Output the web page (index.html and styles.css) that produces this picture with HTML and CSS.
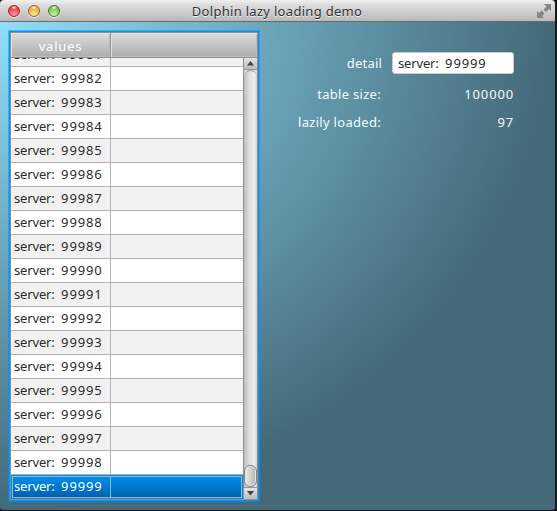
FILE: index.html
```html
<!DOCTYPE html>
<html lang="en">
<head>
<meta charset="utf-8">
<title>Dolphin lazy loading demo</title>
<link rel="stylesheet" href="styles.css">
</head>
<body>
<div class="window">
  <header class="titlebar">
    <div class="lights"><i class="light red"></i><i class="light amber"></i><i class="light green"></i></div>
    <h1>Dolphin lazy loading demo</h1>
    <svg class="expand" width="14" height="14" viewBox="0 0 14 14"><path d="M7 0h7v7l-2-2-3 3-2.500-2.500 3-3zM0 7l2 2 2.500-2.500 3 3L5 12l2 2H0z"/></svg>
  </header>
  <main class="content">
    <section class="table">
      <div class="head"><div class="th first">values</div><div class="th"></div></div>
      <div class="body">
        <div class="rows">
          <div class="row odd"><span class="cell">server: <b>99981</b></span></div>
          <div class="row"><span class="cell">server: <b>99982</b></span></div>
          <div class="row odd"><span class="cell">server: <b>99983</b></span></div>
          <div class="row"><span class="cell">server: <b>99984</b></span></div>
          <div class="row odd"><span class="cell">server: <b>99985</b></span></div>
          <div class="row"><span class="cell">server: <b>99986</b></span></div>
          <div class="row odd"><span class="cell">server: <b>99987</b></span></div>
          <div class="row"><span class="cell">server: <b>99988</b></span></div>
          <div class="row odd"><span class="cell">server: <b>99989</b></span></div>
          <div class="row"><span class="cell">server: <b>99990</b></span></div>
          <div class="row odd"><span class="cell">server: <b>99991</b></span></div>
          <div class="row"><span class="cell">server: <b>99992</b></span></div>
          <div class="row odd"><span class="cell">server: <b>99993</b></span></div>
          <div class="row"><span class="cell">server: <b>99994</b></span></div>
          <div class="row odd"><span class="cell">server: <b>99995</b></span></div>
          <div class="row"><span class="cell">server: <b>99996</b></span></div>
          <div class="row odd"><span class="cell">server: <b>99997</b></span></div>
          <div class="row"><span class="cell">server: <b>99998</b></span></div>
          <div class="row selected"><span class="cell">server: <b>99999</b></span></div>
        </div>
        <div class="scrollbar">
          <div class="arrow"><svg width="7" height="5"><path d="M3.500 0L7 4.500H0z"/></svg></div>
          <div class="track"><div class="thumb"></div></div>
          <div class="arrow"><svg width="7" height="5"><path d="M0 0h7L3.500 4.500z"/></svg></div>
        </div>
      </div>
    </section>
    <section class="form">
      <span class="label detail">detail</span><div class="field">server: <b>99999</b></div>
      <span class="label size">table size:</span><span class="value"><b>100000</b></span>
      <span class="label loaded">lazily loaded:</span><span class="value"><b>97</b></span>
    </section>
  </main>
</div>
</body>
</html>
```
FILE: styles.css
```css
* { box-sizing: border-box; }
body {
  margin: 0;
  height: 511px;
  overflow: hidden;
  background: #16191b;
  font: 13px/17px "Noto Sans", "Open Sans", sans-serif;
  letter-spacing: .3px;
  color: #2b2b2b;
}
b { font-weight: 400; letter-spacing: .85px; }
.window {
  width: 555px;
  height: 510px;
  display: flex;
  flex-direction: column;
  border-radius: 4px 4px 3px 3px;
  overflow: hidden;
}
.titlebar {
  flex: none;
  height: 22px;
  display: grid;
  grid-template-columns: 60px 1fr 60px;
  align-items: center;
  padding: 0 4px 0 8px;
  background: linear-gradient(#f0f0f0, #dcdcdc 25%, #b9b9b9);
  border-bottom: 1px solid #696969;
}
.titlebar h1 {
  margin: 0 0 0 -5px;
  font-size: 13px;
  font-weight: 400;
  letter-spacing: .3px;
  line-height: 20px;
  text-align: center;
  color: #333;
  text-shadow: 0 1px 0 #eee;
}
.lights { display: flex; gap: 8px; }
.light {
  width: 12px;
  height: 12px;
  border-radius: 50%;
  border: 1px solid;
  box-shadow: 0 1px 0 #eee;
}
.red { border-color: #983039; background: radial-gradient(ellipse 3px 2px at 50% 15%, #fff, #fff0), radial-gradient(circle at 50% 85%, #ff9ba0, #e6303d 80%); }
.amber { border-color: #9b6730; background: radial-gradient(ellipse 3px 2px at 50% 15%, #fff, #fff0), radial-gradient(circle at 50% 85%, #ffeb80, #e7a03a 80%); }
.green { border-color: #487a35; background: radial-gradient(ellipse 3px 2px at 50% 15%, #fff, #fff0), radial-gradient(circle at 50% 85%, #caf59b, #68b550 80%); }
.expand { justify-self: end; fill: #858585; }
.content {
  flex: 1;
  display: flex;
  align-items: flex-start;
  padding: 9px 0 0 9px;
  background: radial-gradient(ellipse farthest-side at 0 0, #90def7, #446979);
}
.table {
  width: 250px;
  height: 470px;
  display: flex;
  flex-direction: column;
  border: 1px solid #0093ff;
  outline: 1px solid #0093ff80;
  box-shadow: inset 0 0 0 1px #8f8f8f;
  padding: 1px;
}
.head {
  flex: none;
  height: 25px;
  display: flex;
  border-bottom: 1px solid #8f8f8f;
}
.th {
  flex: 1;
  background: linear-gradient(#dcdcdc, #adadad);
  box-shadow: inset 1px 1px 0 #e4e4e4, inset -1px -1px 0 #bdbdbd;
}
.th.first {
  flex: none;
  width: 100px;
  border-right: 1px solid #8f8f8f;
  color: #fff;
  text-align: center;
  line-height: 26px;
  letter-spacing: .8px;
}
.body { flex: 1; min-height: 0; display: flex; }
.rows {
  width: 233px;
  display: flex;
  flex-direction: column;
  justify-content: flex-end;
  overflow: hidden;
  border-right: 1px solid #8f8f8f;
}
.row {
  flex: none;
  height: 24px;
  display: flex;
  background: #fff;
  border-bottom: 1px solid #b3b3b3;
}
.odd { background: #f1f1f1; }
.cell {
  width: 100px;
  padding-left: 3px;
  line-height: 23px;
  border-right: 1px solid #b3b3b3;
  white-space: pre;
}
.cell, .field { letter-spacing: -.15px; word-spacing: 3.2px; }
.selected {
  border: 1px solid #0088e8;
  background: linear-gradient(#0090f0, #005fa7);
  outline: 1px solid #84bce6;
  outline-offset: -2px;
  color: #fff;
}
.selected .cell { width: 99px; padding-left: 2px; line-height: 21px; border-color: #84bce6; }
.scrollbar {
  width: 13px;
  display: flex;
  flex-direction: column;
  background: #ddd;
}
.arrow {
  height: 12px;
  display: grid;
  place-items: center;
  background: linear-gradient(#e4e4e4, #bcbcbc);
  border-bottom: 1px solid #999;
}
.arrow:last-child { border-bottom: 0; border-top: 1px solid #999; }
.arrow svg { fill: #444; }
.track {
  flex: 1;
  display: flex;
  align-items: flex-end;
  background: linear-gradient(90deg, #bdbdbd, #dedede 40%, #ededed 80%, #d1d1d1);
  border: solid #999;
  border-width: 1px 0 0;
  border-radius: 7px 7px 0 0;
}
.thumb {
  width: 13px;
  height: 22px;
  border: 1px solid #858585;
  border-radius: 6px;
  background: linear-gradient(90deg, #ececec, #b4b4b4);
  box-shadow: inset 0 0 0 1px #e4e4e4;
}
.form {
  display: grid;
  grid-template-columns: 94px 122px;
  grid-template-rows: 22px 24px 16px;
  row-gap: 8px;
  column-gap: 10px;
  align-items: center;
  margin: 21px 0 0 29px;
  color: #f4fbfd;
}
.label { justify-self: end; white-space: nowrap; }
.detail { letter-spacing: .2px; }
.size { letter-spacing: .3px; padding-right: 1px; }
.loaded { letter-spacing: .3px; padding-right: 1px; }
.value { justify-self: end; }
.field {
  height: 22px;
  padding-left: 5px;
  line-height: 20px;
  border: 1px solid #c7ccce;
  border-radius: 3px;
  background: #fff;
  color: #2b2b2b;
}
```
